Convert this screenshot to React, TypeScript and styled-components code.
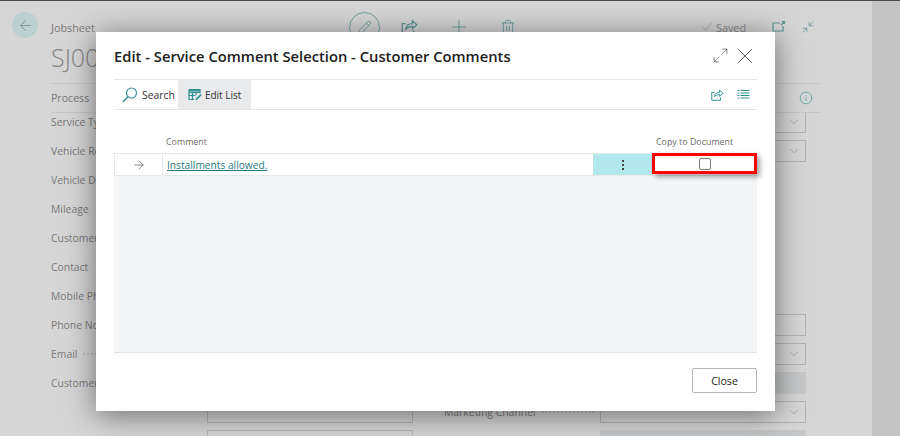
import React from 'react'
import styled, { createGlobalStyle } from 'styled-components'
import { ArrowLeft, ArrowRight, Check, ChevronDown, Info, Maximize2, Minimize2, Pencil, Plus, Trash2, X } from 'lucide-react'

const teal = '#2f8f93'
const fontStack = '"Open Sans", "Noto Sans", "Liberation Sans", sans-serif'

const GlobalStyle = createGlobalStyle`
  html, body {
    margin: 0;
    padding: 0;
    background: #d6d6d6;
    font-family: ${fontStack};
  }
`

const Page = styled.div`
  position: relative;
  display: flex;
  width: 900px;
  height: 436px;
  box-sizing: border-box;
  overflow: hidden;
  background: #d6d6d6;
  border-top: 1px solid #4a4a4a;
`
const BackCol = styled.div`
  width: 51px;
  flex: none;
  padding: 11px 0 0 12px;
  box-sizing: border-box;
`
const BackButton = styled.div`
  width: 26px;
  height: 26px;
  border-radius: 50%;
  background: #bcd0d0;
  color: #6f8c8e;
  display: flex;
  align-items: center;
  justify-content: center;
`
const Main = styled.div`
  width: 769px;
  flex: none;
`
const TopRow = styled.div`
  display: flex;
  align-items: center;
  height: 41px;
  box-sizing: border-box;
  padding-top: 11px;
`
const Crumb = styled.div`
  width: 298px;
  font-size: 10.8px;
  color: #7a7a7a;
`
const Actions = styled.div`
  display: flex;
  align-items: center;
  gap: 30px;
  flex: 1;
  color: #5d9194;
`
const EditCircle = styled.div`
  width: 29px;
  height: 29px;
  border: 1px solid #6f9fa1;
  border-radius: 50%;
  display: flex;
  align-items: center;
  justify-content: center;
  margin-right: -10px;
`
const Saved = styled.div`
  display: flex;
  align-items: center;
  gap: 2px;
  font-size: 10.8px;
  color: #8a8a8a;
  margin-right: 26px;
`
const WindowIcons = styled.div`
  display: flex;
  gap: 15px;
  color: #5d9194;
  margin-right: 5px;
`
const PageTitle = styled.div`
  font-size: 25px;
  font-weight: 300;
  line-height: 30px;
  color: #858585;
  height: 30px;
  margin-bottom: 11px;
`
const Section = styled.div`
  position: relative;
  display: flex;
  align-items: center;
  justify-content: space-between;
  height: 30px;
  box-sizing: border-box;
  background: #d6d6d6;
  border-top: 1px solid #c8c8c8;
  border-bottom: 1px solid #c8c8c8;
  font-size: 10.6px;
  color: #777;
  padding-right: 7px;
  z-index: 1;
`
const FormGrid = styled.div`
  display: grid;
  grid-template-columns: 156px 206px 31px 156px 206px;
  grid-auto-rows: 18px;
  row-gap: 11px;
`
const Label = styled.div`
  display: flex;
  align-items: center;
  font-size: 10.4px;
  color: #7a7a7a;
  white-space: nowrap;
  overflow: hidden;
`
const Leader = styled.span`
  flex: 1;
  margin: 0 6px;
  border-bottom: 2px dotted #c0c0c0;
`
const Gutter = styled.div``
const Field = styled.div<{ $filled?: boolean }>`
  align-self: center;
  height: 22px;
  box-sizing: border-box;
  border: 1px solid ${p => (p.$filled ? 'transparent' : '#b4b4b4')};
  background: ${p => (p.$filled ? '#c6c7c8' : 'transparent')};
  display: flex;
  align-items: center;
  justify-content: flex-end;
  padding-right: 4px;
  color: #8d8d8d;
`
const RightBand = styled.div`
  width: 28px;
  margin-left: auto;
  flex: none;
  background: #c4c4c4;
`

const Dialog = styled.div`
  position: absolute;
  left: 96px;
  top: 31px;
  z-index: 2;
  width: 679px;
  height: 379px;
  box-sizing: border-box;
  padding: 0 18px;
  display: flex;
  flex-direction: column;
  background: #fff;
  box-shadow: 0 4px 28px rgba(0, 0, 0, 0.5);
`
const DialogHeader = styled.div`
  display: flex;
  align-items: center;
  justify-content: space-between;
  height: 48px;
  flex: none;
  border-bottom: 1px solid #e6e6e6;
  box-sizing: border-box;
`
const DialogTitle = styled.div`
  font-size: 14.75px;
  font-weight: 600;
  color: #212121;
`
const HeaderIcons = styled.div`
  display: flex;
  align-items: center;
  gap: 3px;
  margin-right: -1px;
  color: #555;
`
const Toolbar = styled.div`
  display: flex;
  align-items: stretch;
  height: 30px;
  box-sizing: border-box;
  flex: none;
  border-bottom: 1px solid #e6e6e6;
`
const ToolButton = styled.div<{ $active?: boolean }>`
  display: flex;
  align-items: center;
  gap: ${p => (p.$active ? '3px' : '4px')};
  padding: ${p => (p.$active ? '0 10px' : '0 3px 0 8px')};
  background: ${p => (p.$active ? '#e8eaec' : 'transparent')};
  font-size: ${p => (p.$active ? '10px' : '10.4px')};
  color: #333;
`
const ToolIcons = styled.div`
  display: flex;
  align-items: center;
  gap: 13px;
  margin-left: auto;
  margin-right: 7px;
  color: ${teal};
`
const ColumnHeads = styled.div`
  display: grid;
  grid-template-columns: 49px 490px 104px;
  height: 43px;
  flex: none;
  align-items: end;
  font-size: 8.9px;
  color: #6b6b6b;
`
const HeadCell = styled.div`
  padding: 0 0 5px 3px;
`
const Table = styled.div`
  flex: 1;
  display: flex;
  flex-direction: column;
  background: #f4f5f7;
  border-bottom: 1px solid #e2e2e2;
`
const Row = styled.div`
  display: grid;
  grid-template-columns: 49px 430px 60px 104px;
  height: 23px;
  background: #fff;
  border-top: 1px solid #e8e8e8;
  border-bottom: 1px solid #e8e8e8;
  box-sizing: border-box;
`
const ArrowCell = styled.div`
  display: flex;
  align-items: center;
  justify-content: center;
  color: #333;
  border-left: 1px solid #e8e8e8;
  border-right: 1px solid #e8e8e8;
`
const CommentCell = styled.div`
  display: flex;
  align-items: center;
  padding-left: 4px;
  font-size: 10.2px;
`
const CommentLink = styled.a`
  color: #1f7a80;
  text-decoration: underline;
`
const MenuCell = styled.div`
  display: flex;
  flex-direction: column;
  align-items: center;
  justify-content: center;
  gap: 2px;
  background: #b3e8ec;
`
const Dot = styled.span`
  width: 2px;
  height: 2px;
  background: #444;
`
const CheckCell = styled.div`
  position: relative;
  display: flex;
  align-items: center;
  justify-content: center;
  margin: -1px 0 1px -1px;
  border: 3px solid #f00;
  box-shadow: 3px 3px 5px rgba(0, 0, 0, 0.35);
  background: #fff;
  z-index: 1;
`
const CheckBox = styled.div`
  width: 10px;
  height: 10px;
  border: 1px solid #7d7d7d;
  border-radius: 2px;
`
const Footer = styled.div`
  display: flex;
  justify-content: flex-end;
  align-items: flex-start;
  height: 58px;
  flex: none;
  padding-top: 15px;
  box-sizing: border-box;
`
const CloseButton = styled.button`
  width: 65px;
  height: 25px;
  background: #fff;
  border: 1px solid #b5b5b5;
  border-radius: 2px;
  font-family: inherit;
  font-size: 10.6px;
  color: #222;
  padding: 0;
`

const ShareIcon: React.FC<{ size?: number }> = ({ size = 18 }) => (
  <svg width={size} height={size} viewBox="0 0 16 16" fill="none" stroke="currentColor" strokeWidth="1.1">
    <path d="M5 5H2v9h10v-3" />
    <path d="M5 10c.5-3.500 3-5 6-5V2.500L15 6l-4 3.500V7.500c-2.500 0-4.500.8-6 2.500z" />
  </svg>
)

const EditListIcon = () => (
  <svg width="14" height="14" viewBox="0 0 14 14" fill="none" stroke={teal} strokeWidth="1.2">
    <path d="M1 1.500h11v4M1 1.500v10h5M1 4.500h11M1 7.500h6M4.500 4.500v7M8 4.500v3" />
    <path d="M1 2.500h11" strokeWidth="2" />
    <path d="M7.500 12.500l.5-2 4.500-4.500 1.200 1.200-4.500 4.500z" fill={teal} stroke="none" />
  </svg>
)

const PopOutIcon = () => (
  <svg width="14" height="14" viewBox="0 0 14 14" fill="none" stroke="currentColor" strokeWidth="1.2">
    <path d="M8 3H1v8h10V6" />
    <path d="M9 5l3.500-3.500M10 1.500h2.500V4" />
  </svg>
)

const SearchIcon = () => (
  <svg width="16" height="16" viewBox="0 0 16 16" fill="none" stroke={teal} strokeWidth="1.1">
    <circle cx="9.500" cy="6" r="5" />
    <path d="M6 9.500L1 15" strokeWidth="1.4" />
  </svg>
)

const ListIcon = () => (
  <svg width="13" height="13" viewBox="0 0 13 13" fill="none" stroke="currentColor" strokeWidth="1.2">
    <path d="M0.500 2.500h2M0.500 5h2M0.500 7.500h2M0.500 10h2" />
    <path d="M3.500 2.500h9M3.500 5h9M3.500 7.500h9M3.500 10h9" />
  </svg>
)

const leftLabels = ['Service Type', 'Vehicle Registration No.', 'Vehicle Description', 'Mileage', 'Customer No.', 'Contact', 'Mobile Phone No.', 'Phone No.', 'Email', 'Customer Price Group', '', '']
type Kind = 'none' | 'input' | 'select' | 'filled'
const rightFields: Kind[] = ['select', 'select', 'none', 'none', 'none', 'none', 'none', 'input', 'select', 'filled', 'select', 'filled']
const leftFields: Kind[] = ['none', 'none', 'none', 'none', 'none', 'none', 'none', 'none', 'none', 'none', 'input', 'input']

const renderField = (kind: Kind) => {
  if (kind === 'none') return <Gutter />
  if (kind === 'filled') return <Field $filled />
  return <Field>{kind === 'select' && <ChevronDown size={14} strokeWidth={1} />}</Field>
}

const App: React.FC = () => (
  <>
    <GlobalStyle />
    <Page>
      <BackCol>
        <BackButton><ArrowLeft size={17} strokeWidth={1.2} /></BackButton>
      </BackCol>
      <Main>
        <TopRow>
          <Crumb>Jobsheet</Crumb>
          <Actions>
            <EditCircle><Pencil size={15} strokeWidth={1.2} /></EditCircle>
            <ShareIcon />
            <Plus size={22} strokeWidth={0.9} />
            <Trash2 size={16} strokeWidth={1.2} />
          </Actions>
          <Saved><Check size={14} strokeWidth={1} />Saved</Saved>
          <WindowIcons>
            <PopOutIcon />
            <Minimize2 size={14} strokeWidth={1.2} />
          </WindowIcons>
        </TopRow>
        <PageTitle>SJ00</PageTitle>
        <Section>
          Process
          <Info size={14} strokeWidth={1} color={teal} />
        </Section>
        <FormGrid>
          {leftLabels.map((text, i) => (
            <React.Fragment key={i}>
              <Label>{text}{text === 'Email' && <Leader />}</Label>
              {renderField(leftFields[i])}
              <Gutter />
              <Label>{i === 10 && <>Marketing Channel<Leader /></>}</Label>
              {renderField(rightFields[i])}
            </React.Fragment>
          ))}
        </FormGrid>
      </Main>
      <RightBand />
      <Dialog>
        <DialogHeader>
          <DialogTitle>Edit - Service Comment Selection - Customer Comments</DialogTitle>
          <HeaderIcons>
            <Maximize2 size={17} strokeWidth={1} />
            <X size={26} strokeWidth={0.9} />
          </HeaderIcons>
        </DialogHeader>
        <Toolbar>
          <ToolButton>
            <SearchIcon />
            Search
          </ToolButton>
          <ToolButton $active>
            <EditListIcon />
            Edit List
          </ToolButton>
          <ToolIcons>
            <ShareIcon size={14} />
            <ListIcon />
          </ToolIcons>
        </Toolbar>
        <ColumnHeads>
          <span />
          <HeadCell>Comment</HeadCell>
          <HeadCell>Copy to Document</HeadCell>
        </ColumnHeads>
        <Table>
          <Row>
            <ArrowCell><ArrowRight size={14} strokeWidth={1} /></ArrowCell>
            <CommentCell><CommentLink>Installments allowed.</CommentLink></CommentCell>
            <MenuCell><Dot /><Dot /><Dot /></MenuCell>
            <CheckCell><CheckBox /></CheckCell>
          </Row>
        </Table>
        <Footer>
          <CloseButton>Close</CloseButton>
        </Footer>
      </Dialog>
    </Page>
  </>
)

export default App
